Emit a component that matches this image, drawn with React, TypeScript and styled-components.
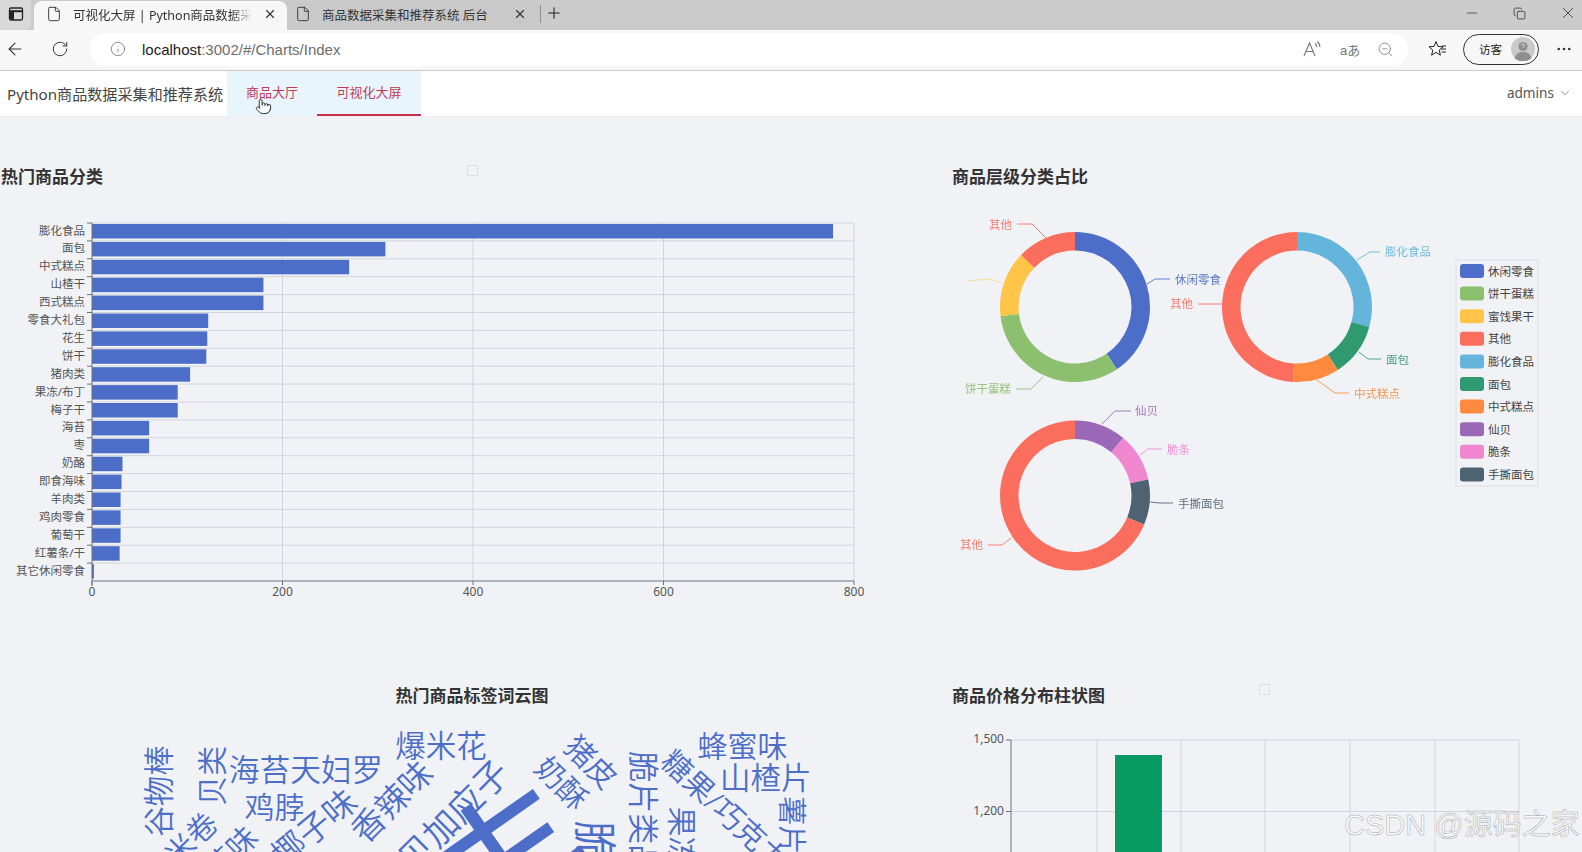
import React from "react";
import styled, { createGlobalStyle } from "styled-components";
import { ArrowLeft, ChevronDown, Copy, Ellipsis, File, Info, Minus, Plus, Pointer, RotateCw, X, ZoomOut } from "lucide-react";

const GlobalStyle = createGlobalStyle`
  html, body {
    margin: 0;
    height: 100%;
    overflow: hidden;
    background: #f0f2f6;
    font-family: "Noto Sans", "Noto Sans CJK SC", sans-serif;
  }
`;

const Page = styled.div`
  position: relative;
  width: 1582px;
  height: 852px;
  overflow: hidden;
`;

const TabStrip = styled.div`
  display: flex;
  align-items: flex-end;
  height: 30px;
  background: #cbcbcb;
`;

const SideButton = styled.div`
  display: flex;
  align-items: center;
  justify-content: center;
  align-self: stretch;
  width: 31px;
  margin-right: 3px;
  padding-bottom: 2px;
  box-sizing: border-box;
  background: #d9d9d9;
  border-radius: 0 0 6px 0;
`;

const Tab = styled.div<{ $active?: boolean }>`
  display: flex;
  align-items: center;
  width: 253px;
  height: 29px;
  padding: ${(p) => (p.$active ? "0 10px 3px 12px" : "0 13px 3px 8px")};
  box-sizing: border-box;
  gap: 11px;
  background: ${(p) => (p.$active ? "#f7f7f7" : "#c9c9c9")};
  border-radius: 8px 8px 0 0;
  color: #333;
  font-size: 12.5px;
`;

const TabLabel = styled.span<{ $fade?: boolean }>`
  flex: 1;
  overflow: hidden;
  white-space: nowrap;
  ${(p) => p.$fade && "mask-image: linear-gradient(to right, #000 88%, transparent);"}
`;

const NewTab = styled.div`
  display: flex;
  align-items: center;
  align-self: stretch;
  padding: 0 0 4px 4px;
`;

const TabDivider = styled.div`
  width: 1px;
  height: 18px;
  margin: 0 0 7px 0;
  background: #8e8e8e;
`;

const WindowControls = styled.div`
  display: flex;
  align-items: center;
  align-self: stretch;
  gap: 33px;
  margin-left: auto;
  padding: 0 5px 4px 0;
  color: #222;
`;

const AddressRow = styled.div`
  display: flex;
  align-items: center;
  height: 41px;
  padding-bottom: 2px;
  box-sizing: border-box;
  background: #f7f7f7;
  border-bottom: 1px solid #c9c9c9;
  color: #333;
`;

const NavButton = styled.div<{ $width: number }>`
  display: flex;
  flex-shrink: 0;
  align-items: center;
  justify-content: center;
  width: ${(p) => p.$width}px;
`;

const MoreButton = styled.div`
  display: flex;
  flex-shrink: 0;
  align-items: center;
  justify-content: center;
  width: 43px;
  padding-left: 7px;
  box-sizing: border-box;
`;

const UrlPill = styled.div`
  display: flex;
  flex-shrink: 0;
  align-items: center;
  width: 1318px;
  height: 33px;
  margin-left: -1px;
  padding: 0 14px 0 20px;
  box-sizing: border-box;
  background: #fff;
  border-radius: 17px;
  font-family: "Liberation Sans", "Noto Sans CJK SC", sans-serif;
  font-size: 15px;
`;

const UrlHost = styled.span`
  margin-left: 16px;
  color: #222;
`;

const UrlRest = styled.span`
  color: #6d6d6d;
`;

const UrlTools = styled.div`
  display: flex;
  align-items: center;
  gap: 17px;
  margin-left: auto;
  color: #777;
`;

const TranslateGlyph = styled.span`
  width: 20px;
  font-size: 13px;
  text-align: center;
  white-space: nowrap;
`;

const GuestPill = styled.div`
  display: flex;
  flex-shrink: 0;
  align-items: center;
  justify-content: space-between;
  width: 76px;
  height: 31px;
  margin-left: -5px;
  padding: 0 3px 0 15px;
  box-sizing: border-box;
  border: 1.5px solid #333;
  border-radius: 16px;
  font-size: 11.5px;
  color: #222;
`;

const TopNav = styled.div`
  display: flex;
  align-items: stretch;
  height: 45px;
  background: #fff;
  border-bottom: 1px solid #eceef2;
`;

const Brand = styled.div`
  display: flex;
  align-items: center;
  width: 220px;
  padding: 0 0 1px 7px;
  font-size: 15.1px;
  color: #444;
  white-space: nowrap;
`;

const MenuItem = styled.div<{ $active?: boolean; $width: number }>`
  display: flex;
  align-items: center;
  justify-content: center;
  width: ${(p) => p.$width}px;
  padding-bottom: 2px;
  box-sizing: border-box;
  background: #e9f5fc;
  border-bottom: 2px solid ${(p) => (p.$active ? "#c9314f" : "transparent")};
  color: #c03a58;
  font-size: 13px;
`;

const UserMenu = styled.div`
  display: flex;
  align-items: center;
  gap: 4px;
  margin-left: auto;
  padding: 0 10px 2px 0;
  font-size: 13.6px;
  color: #555;
`;

const Dashboard = styled.div`
  display: grid;
  grid-template-columns: 944px 638px;
  grid-auto-rows: 519px;
  padding-top: 48px;
`;

const Panel = styled.section`
  position: relative;
`;

const PanelTitle = styled.h3<{ $center?: boolean; $inset?: number }>`
  margin: 0;
  height: 24px;
  padding-left: ${(p) => p.$inset ?? 0}px;
  font-size: 17px;
  line-height: 24px;
  font-weight: 700;
  color: #333;
  text-align: ${(p) => (p.$center ? "center" : "left")};
`;

const Marker = styled.span<{ $left: number }>`
  position: absolute;
  top: 0;
  left: ${(p) => p.$left}px;
  width: 9px;
  height: 9px;
  border: 1px solid #dcdee3;
  border-radius: 1px;
`;

const ChartSvg = styled.svg`
  display: block;
  width: 100%;
  height: 494px;
  overflow: hidden;
  font-family: "Noto Sans", "Noto Sans CJK SC", sans-serif;
`;

const HandCursor = styled.div`
  position: absolute;
  left: 255px;
  top: 98px;
  color: #222;
  line-height: 0;
`;

const Watermark = styled.div`
  position: absolute;
  left: 1344px;
  top: 805px;
  font-family: "Liberation Sans", "Noto Sans CJK SC", sans-serif;
  font-size: 29px;
  line-height: 40px;
  white-space: nowrap;
  color: rgba(255, 255, 255, 0.7);
  -webkit-text-stroke: 0.5px #a8a8a8;
`;

const BLUE = "#4d6ec8";
const GRID = "#d2d5dc";
const AXIS = "#6e7079";
const LABEL = "#555";

const categories: [string, number][] = [
  ["膨化食品", 778], ["面包", 308], ["中式糕点", 270], ["山楂干", 180], ["西式糕点", 180],
  ["零食大礼包", 122], ["花生", 121], ["饼干", 120], ["猪肉类", 103], ["果冻/布丁", 90],
  ["梅子干", 90], ["海苔", 60], ["枣", 60], ["奶酪", 32], ["即食海味", 31],
  ["羊肉类", 30], ["鸡肉零食", 30], ["葡萄干", 30], ["红薯条/干", 29], ["其它休闲零食", 2],
];

const CategoryChart = () => {
  const x0 = 92;
  const unit = 762 / 800;
  const top = 222;
  const row = 17.9;
  const bottom = top + row * categories.length;
  return (
    <ChartSvg viewBox="0 188 944 494">
      {categories.map((_, i) => (
        <line key={i} x1={x0} x2={854} y1={top + row * i} y2={top + row * i} stroke={GRID} />
      ))}
      {[200, 400, 600, 800].map((v) => (
        <line key={v} x1={x0 + v * unit} x2={x0 + v * unit} y1={top} y2={bottom} stroke={GRID} />
      ))}
      {categories.map(([name, value], i) => (
        <g key={name}>
          <rect x={x0} y={top + row * i + 1} width={value * unit} height={14.5} fill={BLUE} />
          <line x1={x0 - 5} x2={x0} y1={top + row * i} y2={top + row * i} stroke={AXIS} />
          <text x={x0 - 7} y={top + row * i + 7} fontSize={11.5} fill={LABEL} textAnchor="end" dominantBaseline="central">
            {name}
          </text>
        </g>
      ))}
      <line x1={x0} x2={x0} y1={top} y2={bottom + 5} stroke={AXIS} />
      <line x1={x0} x2={854} y1={bottom} y2={bottom} stroke={AXIS} />
      {[0, 200, 400, 600, 800].map((v) => (
        <g key={v}>
          <line x1={x0 + v * unit} x2={x0 + v * unit} y1={bottom} y2={bottom + 4} stroke={AXIS} />
          <text x={x0 + v * unit} y={bottom + 10} fontSize={12} fill={LABEL} textAnchor="middle" dominantBaseline="central">
            {v}
          </text>
        </g>
      ))}
    </ChartSvg>
  );
};

const arc = (cx: number, cy: number, from: number, to: number) => {
  const R = 75;
  const r = 56.5;
  const pt = (rad: number, deg: number) => {
    const a = (deg * Math.PI) / 180;
    return `${cx + rad * Math.sin(a)} ${cy - rad * Math.cos(a)}`;
  };
  const large = to - from > 180 ? 1 : 0;
  return `M${pt(R, from)} A${R} ${R} 0 ${large} 1 ${pt(R, to)} L${pt(r, to)} A${r} ${r} 0 ${large} 0 ${pt(r, from)} Z`;
};

const COLORS = {
  blue: "#4d6ec8", green: "#8cc06f", yellow: "#fec548", red: "#fb6e5e", sky: "#64b5dc",
  teal: "#2f9a6f", orange: "#fd8a3e", purple: "#9b68b8", pink: "#ef86cf", slate: "#4f6272",
};

const donuts = [
  {
    cx: 1075, cy: 306,
    slices: [[0, 146, COLORS.blue], [146, 263, COLORS.green], [263, 314, COLORS.yellow], [314, 360, COLORS.red]],
  },
  {
    cx: 1297, cy: 306,
    slices: [[0, 105.5, COLORS.sky], [105.5, 147, COLORS.teal], [147, 183, COLORS.orange], [183, 360, COLORS.red]],
  },
  {
    cx: 1075, cy: 494.5,
    slices: [[0, 40, COLORS.purple], [40, 77.6, COLORS.pink], [77.6, 112.8, COLORS.slate], [112.8, 360, COLORS.red]],
  },
] as { cx: number; cy: number; slices: [number, number, string][] }[];

const callouts: { text: string; x: number; y: number; color: string; line: string; end?: boolean }[] = [
  { text: "其他", x: 1012, y: 223, color: COLORS.red, end: true, line: "1017,223 1032,223 1046,237" },
  { text: "休闲零食", x: 1175, y: 278, color: COLORS.blue, line: "1147,283 1155,278 1170,278" },
  { text: "饼干蛋糕", x: 1011, y: 387, color: COLORS.green, end: true, line: "1016,388 1031,388 1043,376" },
  { text: "", x: 967, y: 280, color: COLORS.yellow, line: "967,280 990,278 1002,282" },
  { text: "其他", x: 1193, y: 302, color: COLORS.red, end: true, line: "1198,303 1222,303" },
  { text: "膨化食品", x: 1385, y: 250, color: COLORS.sky, line: "1357,259 1370,251 1380,251" },
  { text: "面包", x: 1386, y: 358, color: COLORS.teal, line: "1359,351 1368,358 1381,358" },
  { text: "中式糕点", x: 1354, y: 392, color: COLORS.orange, line: "1317,379 1335,392 1349,392" },
  { text: "仙贝", x: 1135, y: 409, color: COLORS.purple, line: "1102,423 1115,410 1131,410" },
  { text: "脆条", x: 1167, y: 448, color: COLORS.pink, line: "1140,454 1148,448 1162,448" },
  { text: "手撕面包", x: 1178, y: 502, color: COLORS.slate, line: "1150,501 1160,502 1173,502" },
  { text: "其他", x: 983, y: 543, color: COLORS.red, end: true, line: "988,544 1002,544 1011,537" },
];

const legend: [string, string][] = [
  ["休闲零食", COLORS.blue], ["饼干蛋糕", COLORS.green], ["蜜饯果干", COLORS.yellow], ["其他", COLORS.red],
  ["膨化食品", COLORS.sky], ["面包", COLORS.teal], ["中式糕点", COLORS.orange], ["仙贝", COLORS.purple],
  ["脆条", COLORS.pink], ["手撕面包", COLORS.slate],
];

const DonutChart = () => (
  <ChartSvg viewBox="944 188 638 494">
    {donuts.map((d) =>
      d.slices.map(([from, to, color]) => (
        <path key={`${d.cx}-${d.cy}-${from}`} d={arc(d.cx, d.cy, from, to)} fill={color} />
      ))
    )}
    {callouts.map((c) => (
      <g key={c.line}>
        <polyline points={c.line} fill="none" stroke={c.color} strokeWidth={1} opacity={c.text ? 0.85 : 0.5} />
        <text x={c.x} y={c.y} fontSize={11.5} fill={c.color} opacity={0.9} textAnchor={c.end ? "end" : "start"} dominantBaseline="central">
          {c.text}
        </text>
      </g>
    ))}
    <rect x={1456} y={259} width={82} height={226} fill="none" stroke="#dcdee3" />
    {legend.map(([name, color], i) => (
      <g key={name}>
        <rect x={1460} y={263 + i * 22.6} width={24} height={14} rx={3} fill={color} />
        <text x={1488} y={270 + i * 22.6} fontSize={11.5} fill="#444" dominantBaseline="central">
          {name}
        </text>
      </g>
    ))}
  </ChartSvg>
);

const SCALE = 1582 / 1568;

const words: { text: string; x: number; y: number; size: number; rotate: number; weight?: number }[] = [
  { text: "谷物棒", x: 157, y: 783, size: 30.5, rotate: -90 },
  { text: "贝类", x: 210, y: 768, size: 30, rotate: -90 },
  { text: "海苔天妇罗", x: 303, y: 761, size: 30.8, rotate: 0 },
  { text: "鸡脖", x: 272, y: 798, size: 30, rotate: 0 },
  { text: "爆米花", x: 437, y: 737, size: 30.5, rotate: 0 },
  { text: "椰子味", x: 311, y: 819, size: 33, rotate: -40 },
  { text: "香辣味", x: 388, y: 793, size: 33, rotate: -45 },
  { text: "贝加应子", x: 449, y: 807, size: 35, rotate: -45 },
  { text: "米卷", x: 189, y: 830, size: 30, rotate: -45 },
  { text: "海苔味", x: 218, y: 854, size: 30, rotate: -45 },
  { text: "丰", x: 503, y: 858, size: 160, rotate: -35, weight: 400 },
  { text: "奶酥", x: 557, y: 775, size: 30, rotate: 45 },
  { text: "猪皮", x: 586, y: 754, size: 30, rotate: 45 },
  { text: "脆片类品", x: 638, y: 805, size: 31, rotate: 90 },
  { text: "糖果/巧克力", x: 719, y: 802, size: 30, rotate: 43 },
  { text: "果冻", x: 676, y: 828, size: 30, rotate: 90 },
  { text: "脆", x: 590, y: 834, size: 44, rotate: 90 },
  { text: "蜂蜜味", x: 736, y: 738, size: 30, rotate: 0 },
  { text: "山楂片", x: 759, y: 769, size: 30.5, rotate: 0 },
  { text: "薯片", x: 785, y: 817, size: 29, rotate: 90 },
];

const WordCloud = () => (
  <ChartSvg viewBox="0 707 944 494">
    {words.map((w) => {
      const x = w.x * SCALE;
      const y = w.y * SCALE;
      return (
        <text
          key={w.text}
          x={x}
          y={y}
          fontSize={w.size}
          fontWeight={w.weight ?? 350}
          fill={BLUE}
          textAnchor="middle"
          dominantBaseline="central"
          transform={`rotate(${w.rotate} ${x} ${y})`}
        >
          {w.text}
        </text>
      );
    })}
  </ChartSvg>
);

const PriceChart = () => {
  const xs = [1011, 1097, 1181, 1265, 1350, 1435, 1519];
  return (
    <ChartSvg viewBox="944 707 638 494">
      {xs.slice(1).map((x) => (
        <line key={x} x1={x} x2={x} y1={739} y2={900} stroke={GRID} />
      ))}
      {([[739, 737.5, "1,500"], [810.5, 809.5, "1,200"]] as [number, number, string][]).map(([y, textY, label]) => (
        <g key={label}>
          <line x1={1011} x2={1519} y1={y} y2={y} stroke={GRID} />
          <line x1={1006} x2={1011} y1={y} y2={y} stroke={AXIS} />
          <text x={1004} y={textY} fontSize={12} fill={LABEL} textAnchor="end" dominantBaseline="central">
            {label}
          </text>
        </g>
      ))}
      <line x1={1011} x2={1011} y1={739} y2={900} stroke={AXIS} />
      <rect x={1115} y={754} width={47} height={150} fill="#079a63" />
    </ChartSvg>
  );
};

const SidebarIcon = () => (
  <svg width="16" height="16" viewBox="0 0 16 16" fill="none" stroke="#222" strokeWidth="1.3">
    <rect x="1.5" y="2" width="13" height="12" rx="1.5" />
    <path d="M1.5 5.2h13" strokeWidth="2" />
    <rect x="2" y="5" width="4" height="8.5" fill="#222" stroke="none" />
  </svg>
);

const ReadAloudIcon = () => (
  <svg width="20" height="18" viewBox="0 0 20 18" fill="none" stroke="#777" strokeWidth="1.1">
    <path d="M1 16 6.5 3 12 16M3 11.5h7" />
    <path d="M12 3.5c1.2 1 1.8 2.2 1.8 3.5M14.5 1.5c1.6 1.5 2.4 3.3 2.4 5.5" />
  </svg>
);

const FavoritesIcon = () => (
  <svg width="20" height="18" viewBox="0 0 20 18" fill="none" stroke="#222" strokeWidth="1" strokeLinejoin="round">
    <path d="M8 1.5 10 6.4l5 .4-3.8 3.3 1.2 5.1L8 12.4l-4.4 2.8 1.2-5.1L1 6.8l5-.4z" />
    <path d="M13 9h5M13.5 12h4.5M14 6h4" />
  </svg>
);

const AvatarIcon = () => (
  <svg width="24" height="24" viewBox="0 0 24 24">
    <circle cx="12" cy="12" r="12" fill="#c9c9c9" />
    <circle cx="12" cy="9.5" r="4.6" fill="#8f8f8f" />
    <path d="M3.5 21c1.5-4.4 4.7-6 8.5-6s7 1.6 8.5 6a12 12 0 0 1-17 0z" fill="#8f8f8f" />
    <path d="M10.6 8.5c0-2 2.9-2 2.9-.2 0 1.2-1.4 1.1-1.4 2.4" fill="none" stroke="#ddd" strokeWidth="1" />
  </svg>
);

const App: React.FC = () => {
  return (
    <Page>
      <GlobalStyle />
      <TabStrip>
        <SideButton>
          <SidebarIcon />
        </SideButton>
        <Tab $active>
          <File size={16} strokeWidth={1.4} />
          <TabLabel $fade>可视化大屏 | Python商品数据采集和推荐系统</TabLabel>
          <X size={14} />
        </Tab>
        <Tab>
          <File size={16} strokeWidth={1.4} />
          <TabLabel>商品数据采集和推荐系统 后台</TabLabel>
          <X size={14} />
        </Tab>
        <TabDivider />
        <NewTab>
          <Plus size={18} strokeWidth={1.4} color="#222" />
        </NewTab>
        <WindowControls>
          <Minus size={16} strokeWidth={1} />
          <Copy size={13} strokeWidth={1.3} />
          <X size={18} strokeWidth={1} />
        </WindowControls>
      </TabStrip>

      <AddressRow>
        <NavButton $width={29}>
          <ArrowLeft size={20} strokeWidth={1.3} />
        </NavButton>
        <NavButton $width={62}>
          <RotateCw size={18} strokeWidth={1.3} />
        </NavButton>
        <UrlPill>
          <Info size={16} strokeWidth={1.1} color="#666" />
          <UrlHost>localhost</UrlHost>
          <UrlRest>:3002/#/Charts/Index</UrlRest>
          <UrlTools>
            <ReadAloudIcon />
            <TranslateGlyph>aあ</TranslateGlyph>
            <ZoomOut size={17} strokeWidth={1.1} />
          </UrlTools>
        </UrlPill>
        <NavButton $width={60}>
          <FavoritesIcon />
        </NavButton>
        <GuestPill>
          访客
          <AvatarIcon />
        </GuestPill>
        <MoreButton>
          <Ellipsis size={18} strokeWidth={1.6} />
        </MoreButton>
      </AddressRow>

      <TopNav>
        <Brand>Python商品数据采集和推荐系统</Brand>
        <MenuItem $width={90}>商品大厅</MenuItem>
        <MenuItem $width={104} $active>可视化大屏</MenuItem>
        <UserMenu>
          admins
          <ChevronDown size={14} strokeWidth={1.1} />
        </UserMenu>
      </TopNav>

      <Dashboard>
        <Panel>
          <PanelTitle $inset={1}>热门商品分类</PanelTitle>
          <Marker $left={467} />
          <CategoryChart />
        </Panel>
        <Panel>
          <PanelTitle $inset={8}>商品层级分类占比</PanelTitle>
          <DonutChart />
        </Panel>
        <Panel>
          <PanelTitle $center>热门商品标签词云图</PanelTitle>
          <WordCloud />
        </Panel>
        <Panel>
          <PanelTitle $inset={8}>商品价格分布柱状图</PanelTitle>
          <Marker $left={315} />
          <PriceChart />
        </Panel>
      </Dashboard>

      <HandCursor>
        <Pointer size={17} strokeWidth={1.3} fill="#fff" />
      </HandCursor>
      <Watermark>CSDN @源码之家</Watermark>
    </Page>
  );
};

export default App;
